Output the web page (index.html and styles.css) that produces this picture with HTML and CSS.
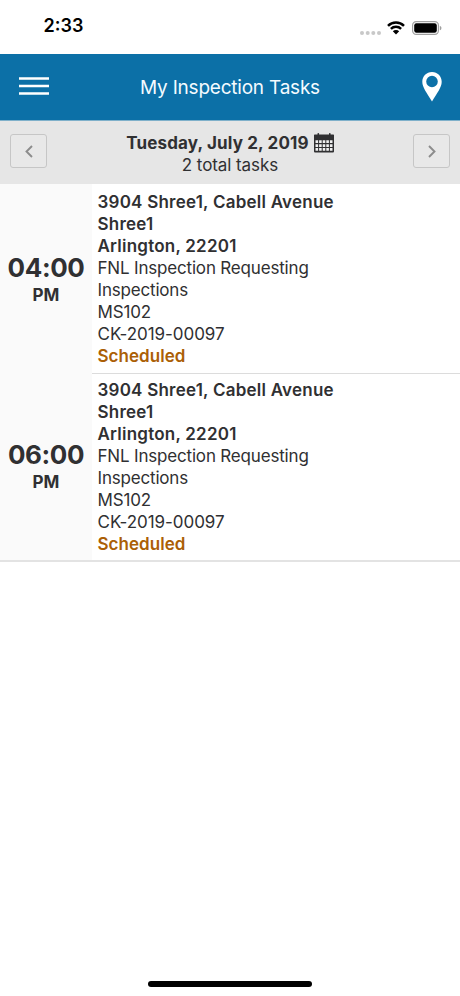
FILE: index.html
```html
<!DOCTYPE html>
<html lang="en">
<head>
<meta charset="utf-8">
<title>My Inspection Tasks</title>
<link rel="stylesheet" href="styles.css">
</head>
<body>
<div class="screen">
  <div class="status">
    <span class="clock">2:33</span>
    <div class="indicators">
      <svg class="signal" width="21" height="4" viewBox="0 0 21 4"><g fill="#c8c8c8"><circle cx="2" cy="2" r="2"/><circle cx="7.7" cy="2" r="2"/><circle cx="13.3" cy="2" r="2"/><circle cx="19" cy="2" r="2"/></g></svg>
      <svg class="wifi" width="18" height="14" viewBox="0 0 18 14"><path d="M1 4.9A11.4 11.4 0 0 1 17 4.9M3.9 7.9A7.3 7.3 0 0 1 14.1 7.9" fill="none" stroke="#000" stroke-width="2.5"/><path d="M5.8 10.3A4.6 4.6 0 0 1 12.2 10.3L9 13.5Z"/></svg>
      <svg class="battery" width="30" height="14" viewBox="0 0 30 14"><rect x=".6" y=".6" width="25.8" height="12.8" rx="3.6" fill="none" stroke="#a0a0a0" stroke-width="1.2"/><rect x="2.2" y="2.2" width="22.6" height="9.6" rx="2.2"/><path d="M27.8 4.7C30 5.5 30 8.5 27.8 9.3Z" fill="#a0a0a0"/></svg>
    </div>
  </div>
  <header class="appbar">
    <svg class="menu" width="30" height="18" viewBox="0 0 30 18"><path d="M0 1.5H30M0 9H30M0 16.5H30" stroke="#fff" stroke-width="2.6"/></svg>
    <h1 class="title">My Inspection Tasks</h1>
    <svg class="pin" width="20" height="30" viewBox="0 0 20 30"><path fill="#fff" fill-rule="evenodd" d="M10 0C4.4 0 .3 4.3.3 9.7.3 15.5 5 21 10 29.5 15 21 19.7 15.5 19.7 9.7 19.7 4.3 15.6 0 10 0ZM10 3.7A5.8 5.8 0 1 1 10 15.3 5.8 5.8 0 0 1 10 3.7Z"/></svg>
  </header>
  <div class="daybar">
    <button class="nav" aria-label="Previous day"><svg width="8" height="13" viewBox="0 0 8 13"><path d="M7 1 1.5 6.5 7 12" fill="none" stroke="#8c8c8c" stroke-width="1.9"/></svg></button>
    <div class="day">
      <div class="date"><span class="date-text">Tuesday, July 2, 2019</span><svg class="calendar" width="20" height="20" viewBox="0 0 20 20"><path fill="#303032" d="M0 2Q0 1.5.7 1.5H3.5V.6Q3.5 0 4.3 0T5.1.6V1.5H15V.6Q15 0 15.8 0T16.6.6V1.5H19.3Q20 1.5 20 2V18.5Q20 19.5 19 19.5H1Q0 19.5 0 18.5Z"/><path fill="#f1f1f1" d="M1.5 7.3H4.1V10H1.5ZM5.1 7.3H7.7V10H5.1ZM8.7 7.3H11.3V10H8.7ZM12.3 7.3H14.9V10H12.3ZM15.9 7.3H18.5V10H15.9ZM1.5 11.2H4.1V13.9H1.5ZM5.1 11.2H7.7V13.9H5.1ZM8.7 11.2H11.3V13.9H8.7ZM12.3 11.2H14.9V13.9H12.3ZM15.9 11.2H18.5V13.9H15.9ZM1.5 15.1H4.1V17.8H1.5ZM5.1 15.1H7.7V17.8H5.1ZM8.7 15.1H11.3V17.8H8.7ZM12.3 15.1H14.9V17.8H12.3ZM15.9 15.1H18.5V17.8H15.9Z"/></svg></div>
      <div class="total">2 total tasks</div>
    </div>
    <button class="nav" aria-label="Next day"><svg width="8" height="13" viewBox="0 0 8 13"><path d="M1 1 6.5 6.5 1 12" fill="none" stroke="#8c8c8c" stroke-width="1.9"/></svg></button>
  </div>
  <main class="tasks">
    <article class="task">
      <div class="time"><span class="hour">04:00</span><span class="period">PM</span></div>
      <div class="details">
        <div class="address"><div>3904 Shree1, Cabell Avenue</div><div>Shree1</div><div>Arlington, 22201</div></div>
        <div class="info"><div>FNL Inspection Requesting</div><div>Inspections</div><div>MS102</div><div class="case">CK-2019-00097</div></div>
        <div class="state">Scheduled</div>
      </div>
    </article>
    <article class="task">
      <div class="time"><span class="hour">06:00</span><span class="period">PM</span></div>
      <div class="details">
        <div class="address"><div>3904 Shree1, Cabell Avenue</div><div>Shree1</div><div>Arlington, 22201</div></div>
        <div class="info"><div>FNL Inspection Requesting</div><div>Inspections</div><div>MS102</div><div class="case">CK-2019-00097</div></div>
        <div class="state">Scheduled</div>
      </div>
    </article>
  </main>
  <div class="home"></div>
</div>
</body>
</html>
```

FILE: styles.css
```css
* { box-sizing: border-box; }
body { margin: 0; background: #fff; color: #303032; font-family: Inter, "Liberation Sans", sans-serif; }
svg { display: block; flex: none; }
.screen { display: flex; flex-direction: column; width: 460px; height: 996px; }
.status { display: flex; justify-content: space-between; height: 54px; padding: 13px 18px 0 43.5px; color: #000; }
.clock { padding-top: 1px; font-size: 18px; line-height: 24px; font-weight: 600; }
.indicators { display: flex; align-items: flex-start; padding-top: 8px; }
.signal { margin: 10px 6px 0 0; }
.battery { margin-left: 7px; }
.appbar { display: flex; align-items: center; justify-content: space-between; height: 67px; padding: 0 18px 0 19px; background: #0c70a7; border-bottom: 1px solid #7fb0ca; }
.menu { margin-bottom: 2px; }
.title { margin: 0; padding: 1px 11px 0 0; color: #f4fbff; font-size: 19px; line-height: 24px; font-weight: 400; letter-spacing: -.22px; }
.daybar { display: flex; align-items: flex-start; justify-content: space-between; height: 63px; padding: 11px 10px 0; background: #e6e6e6; }
.nav { display: flex; align-items: center; justify-content: center; width: 37px; height: 34px; margin-top: 2px; padding: 0; background: #e8e8e8; border: 1px solid #c6c6c6; border-radius: 3px; }
.day { text-align: center; line-height: 22px; }
.date { display: flex; gap: 5px; font-size: 17px; font-weight: 650; letter-spacing: .14px; }
.calendar { margin-top: 1px; }
.total { font-size: 17px; letter-spacing: -.08px; }
.task { display: flex; height: 188px; }
.time { display: flex; flex-direction: column; align-items: center; justify-content: center; width: 92px; padding-top: 1px; background: #fafafa; }
.hour { font-size: 26px; line-height: 32px; font-weight: 650; letter-spacing: -.4px; }
.period { font-size: 17px; line-height: 22px; font-weight: 650; }
.details { flex: 1; padding: 7px 0 0 5.5px; font-size: 17px; line-height: 22px; }
.task:first-child .details { height: 190px; border-bottom: 1px solid #dcdcdc; }
.task:last-child .time { padding-top: 0; }
.address { font-weight: 620; letter-spacing: .23px; }
.info { letter-spacing: -.18px; }
.case { letter-spacing: -.04px; }
.state { color: #ab5f06; font-weight: 640; letter-spacing: .05px; }
.tasks { border-bottom: 2px solid #e3e3e3; }
.home { width: 164px; height: 6px; margin: auto auto 9px; border-radius: 3px; background: #000; }
```
